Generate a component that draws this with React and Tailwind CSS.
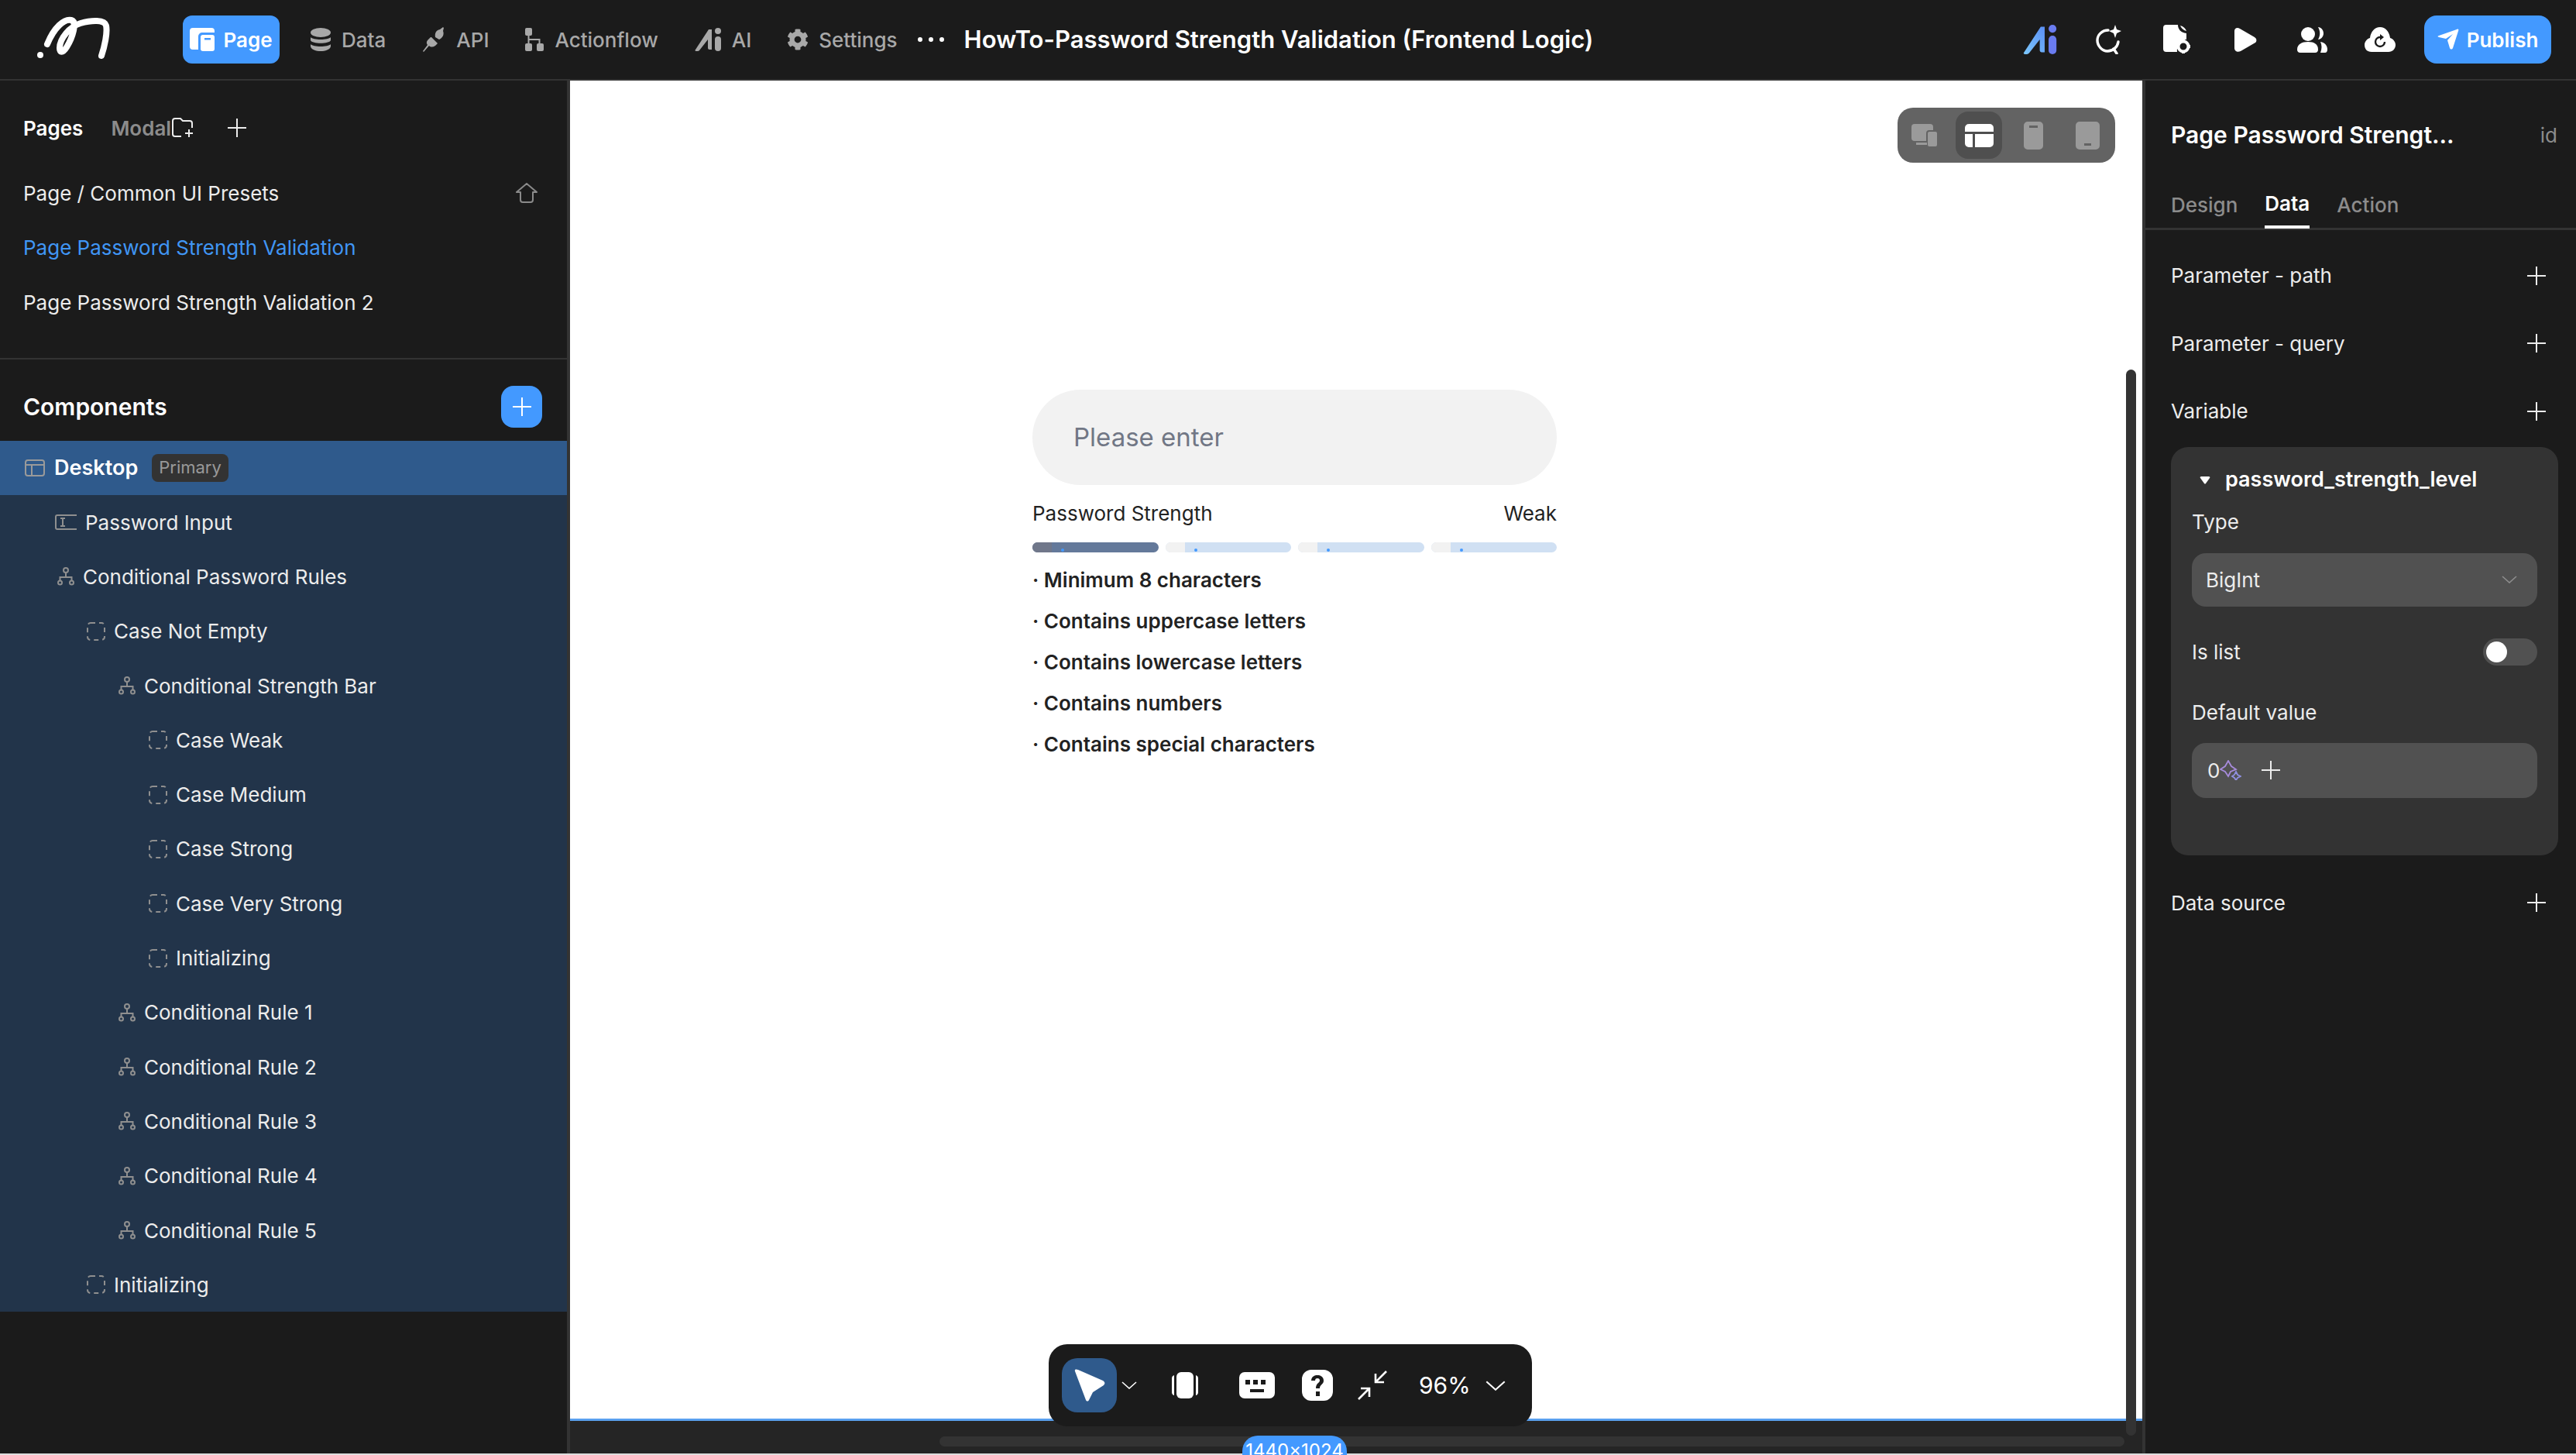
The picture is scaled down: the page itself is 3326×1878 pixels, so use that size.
import React from 'react';
import { FaCog } from 'react-icons/fa';

const Plus = ({ size = 26, className = '' }) => (
  <svg width={size} height={size} viewBox="0 0 26 26" className={className} fill="none" stroke="currentColor" strokeWidth="2">
    <path d="M13 1v24M1 13h24" />
  </svg>
);

const Chevron = ({ w = 20, h = 10, className = '' }) => (
  <svg width={w} height={h} viewBox="0 0 20 10" className={className} fill="none" stroke="currentColor" strokeWidth="1.6">
    <path d="M1 1l9 8 9-8" />
  </svg>
);

const Logo = () => (
  <svg width="110" height="60" viewBox="0 0 110 60" fill="none" stroke="#fff" strokeLinecap="round">
    <circle cx="6" cy="50" r="4" fill="#fff" stroke="none" />
    <path d="M15 36C24 14 37 3 46 5c8 2 2 22-6 35-5 8-9 7-9 1 0-12 13-28 27-32 14-4 31-5 33 3 2 9-2 27-6 39" strokeWidth="8" />
  </svg>
);

const PageIcon = () => (
  <svg width="33" height="30" viewBox="0 0 33 30" fill="#fff">
    <path d="M4 0h24a4 4 0 0 1 4 4v2H16a5 5 0 0 0-5 5v17H4a4 4 0 0 1-4-4V4a4 4 0 0 1 4-4z" />
    <rect x="14" y="9" width="18" height="21" rx="3" />
    <rect x="19" y="13" width="8" height="2.5" fill="#4399ff" />
  </svg>
);

const DataIcon = () => (
  <svg width="28" height="30" viewBox="0 0 28 30" fill="currentColor">
    <ellipse cx="14" cy="6" rx="13" ry="6" />
    <path d="M1 12c3 4 23 4 26 0v4c-2 5-24 5-26 0zM1 21c3 4 23 4 26 0v3c-2 8-24 8-26 0z" />
  </svg>
);

const ApiIcon = () => (
  <svg width="30" height="32" viewBox="0 0 30 32" fill="currentColor">
    <path d="M16 13c-1-5 1-9 6-10l4-3 1 1-1 4c2 5-1 9-5 11z" />
    <path d="M11 13l8 8-3 3c-3 2-6 2-8 0l-7 8-1-1 6-8c-2-3-1-5 1-7l1-1 2-2z" />
  </svg>
);

const FlowIcon = () => (
  <svg width="26" height="30" viewBox="0 0 26 30" fill="currentColor">
    <rect x="1" y="0" width="9" height="10" rx="2" />
    <rect x="1" y="20" width="9" height="10" rx="2" />
    <rect x="16" y="20" width="9" height="10" rx="2" />
    <path d="M4.5 9h2v5h14v7h-2v-5h-12v5h-2z" />
  </svg>
);

const AiIcon = ({ left = 'currentColor', right = 'currentColor', w = 37, h = 30 }) => (
  <svg width={w} height={h} viewBox="0 0 37 30" fill="none">
    <path d="M3 28L20 2h4v26h-3c-1 0-2-1-2-2V15L8 29c-2 2-7 1-5-1z" fill={left} />
    <circle cx="32" cy="4" r="4" fill={right} />
    <rect x="28" y="11" width="8" height="19" rx="4" fill={right} />
  </svg>
);

const SearchSpark = () => (
  <svg width="36" height="38" viewBox="0 0 36 38" fill="none" stroke="#fff" strokeWidth="3.4">
    <path d="M17 7C9 7 3 13 3 20s6 14 13 14c7 0 13-5 14-12" strokeLinecap="round" />
    <path d="M24 31l4 6" strokeLinecap="round" />
    <path d="M26 0l2 6 6 2-6 3-2 6-2-6-6-3 6-2z" fill="#fff" stroke="none" />
  </svg>
);

const DocGear = () => (
  <svg width="36" height="38" viewBox="0 0 36 38" fill="#fff">
    <path d="M4 0h15c0 6 4 10 11 11v8c-7 0-13 6-12 16H4a4 4 0 0 1-4-4V4a4 4 0 0 1 4-4z" />
    <path d="M22 1c1 3 4 6 8 7-1-3-4-6-8-7z" />
    <circle cx="26" cy="28" r="6.5" fill="none" stroke="#fff" strokeWidth="4" />
    <path d="M24 19h4v3h-4zM24 34h4v3h-4zM17 26h3v4h-3zM32 26h3v4h-3z" />
  </svg>
);

const PlayIcon = () => (
  <svg width="29" height="31" viewBox="0 0 29 31" fill="#fff">
    <path d="M0 4c0-4 4-5 7-3l19 11c3 2 3 5 1 7L8 30c-4 2-8 0-8-4z" />
  </svg>
);

const UsersIcon = () => (
  <svg width="39" height="33" viewBox="0 0 39 33" fill="#fff">
    <ellipse cx="14" cy="9" rx="9" ry="9" />
    <path d="M0 29c0-7 6-10 14-10s13 3 13 10c0 2-1 4-4 4H4c-3 0-4-2-4-4z" />
    <path d="M27 0c4 0 7 4 7 8s-3 8-7 8c3-5 3-11 0-16zM30 19c6 1 9 5 9 10 0 2-1 4-3 4h-6c2-5 2-10 0-14z" />
  </svg>
);

const CloudIcon = () => (
  <svg width="40" height="32" viewBox="0 0 40 32" fill="#fff">
    <path d="M9 32C3 32 0 28 0 23c0-4 3-8 7-9 1-8 6-14 13-14s12 6 13 14c4 1 7 5 7 9 0 5-4 9-9 9z" />
    <path d="M20 13a6 6 0 1 0 6 6" fill="none" stroke="#1b1b1b" strokeWidth="2.4" />
    <path d="M20 9l5 4-5 4z" fill="#1b1b1b" />
  </svg>
);

const SendIcon = () => (
  <svg width="28" height="28" viewBox="0 0 28 28" fill="#fff">
    <path d="M2 9L25 1c2-1 3 0 2 2l-7 22c-1 2-3 2-4 0l-3-10 7-8-9 6-9-2c-2-1-2-1 0-2z" />
  </svg>
);

const FolderPlus = () => (
  <svg width="30" height="26" viewBox="0 0 30 26" fill="none" stroke="currentColor" strokeWidth="2">
    <path d="M13 24H5a3 3 0 0 1-3-3V4a3 3 0 0 1 3-3h7l3 3h9a3 3 0 0 1 3 3v6" />
    <path d="M23 15v10M18 20h10" />
  </svg>
);

const HomeIcon = () => (
  <svg width="30" height="26" viewBox="0 0 30 26" fill="none" stroke="#8a8a8a" strokeWidth="2">
    <path d="M15 1L2 12h5v10a3 3 0 0 0 3 3h10a3 3 0 0 0 3-3V12h5z" strokeLinejoin="round" />
  </svg>
);

const LayoutIcon = () => (
  <svg width="26" height="22" viewBox="0 0 26 22" fill="none" stroke="#9a9a9a" strokeWidth="2">
    <rect x="1" y="1" width="24" height="20" rx="3" />
    <path d="M1 7h24M9 7v14" />
  </svg>
);

const InputIcon = () => (
  <svg width="28" height="20" viewBox="0 0 28 20" fill="none" stroke="#8f8f8f" strokeWidth="2">
    <path d="M28 1H3a2 2 0 0 0-2 2v14a2 2 0 0 0 2 2h25" />
    <path d="M7 5h6M10 5v10M7 15h6" />
  </svg>
);

const BranchIcon = () => (
  <svg width="22" height="24" viewBox="0 0 22 24" fill="none" stroke="#8f8f8f" strokeWidth="2">
    <circle cx="11" cy="4" r="3" />
    <circle cx="3.5" cy="20" r="2.5" />
    <circle cx="18.5" cy="20" r="2.5" />
    <path d="M11 7v6M3.5 17v-4h15v4" />
  </svg>
);

const DashedIcon = () => (
  <svg width="24" height="24" viewBox="0 0 24 24" fill="none" stroke="#8f8f8f" strokeWidth="2" strokeDasharray="6 5">
    <rect x="1" y="1" width="22" height="22" rx="4" />
  </svg>
);

const Sparkles = () => (
  <svg width="28" height="26" viewBox="0 0 28 26" fill="none" strokeWidth="1.8">
    <path d="M11 1l4 7 6 4-7 3-3 6-4-6-6-3 6-4z" stroke="#a78bdc" />
    <path d="M21 15l2 4 4 2-4 2-2 3-2-3-3-2 3-2z" stroke="#8f8fe0" />
  </svg>
);

const navItems = [
  { label: 'Data', icon: <DataIcon />, cls: 'ml-[39px]' },
  { label: 'API', icon: <ApiIcon />, cls: 'ml-[48px]' },
  { label: 'Actionflow', icon: <FlowIcon />, cls: 'ml-[46px]' },
  { label: 'AI', icon: <AiIcon />, cls: 'ml-[45px]' },
  { label: 'Settings', icon: <FaCog size={28} />, cls: 'ml-[46px]' },
];

const TopBar = () => (
  <header className="flex h-[104px] shrink-0 items-center border-b-2 border-[#333] bg-[#1b1b1b] text-[#a8a8a8]">
    <div className="ml-[46px] w-[190px] shrink-0"><Logo /></div>
    <div className="flex h-[62px] w-[125px] shrink-0 items-center justify-center gap-[10px] rounded-[12px] bg-[#4399ff] text-[26px] font-semibold text-white">
      <PageIcon /> Page
    </div>
    {navItems.map((item) => (
      <div key={item.label} className={`flex items-center gap-[13px] text-[26px] font-medium ${item.cls}`}>
        {item.icon}
        {item.label}
      </div>
    ))}
    <div className="ml-[26px] flex w-[34px] justify-between">
      <span className="h-[6px] w-[6px] rounded-full bg-white" />
      <span className="h-[6px] w-[6px] rounded-full bg-white" />
      <span className="h-[6px] w-[6px] rounded-full bg-white" />
    </div>
    <div className="ml-[26px] text-[31px] font-semibold text-white">HowTo-Password Strength Validation (Frontend Logic)</div>
    <div className="ml-auto flex items-center text-white">
      <AiIcon left="url(#aiGrad)" right="#6a7cf0" w={56} h={38} />
      <svg width="0" height="0">
        <defs>
          <linearGradient id="aiGrad" x1="0" y1="1" x2="1" y2="0">
            <stop offset="0" stopColor="#7cc8fb" />
            <stop offset="1" stopColor="#5b8ff5" />
          </linearGradient>
        </defs>
      </svg>
      <div className="ml-[44px]"><SearchSpark /></div>
      <div className="ml-[52px]"><DocGear /></div>
      <div className="ml-[56px]"><PlayIcon /></div>
      <div className="ml-[52px]"><UsersIcon /></div>
      <div className="ml-[48px]"><CloudIcon /></div>
      <div className="mx-[32px] ml-[37px] flex h-[62px] w-[164px] items-center justify-center gap-[10px] rounded-[16px] bg-[#4399ff] text-[26px] font-semibold">
        <SendIcon /> Publish
      </div>
    </div>
  </header>
);

const pages = [
  { label: 'Page / Common UI Presets', cls: 'text-[#ececec]', home: true },
  { label: 'Page Password Strength Validation', cls: 'text-[#4096f5]' },
  { label: 'Page Password Strength Validation 2', cls: 'text-[#ececec]' },
];

const tree = [
  { label: 'Password Input', icon: <InputIcon />, cls: 'pl-[71px]' },
  { label: 'Conditional Password Rules', icon: <BranchIcon />, cls: 'pl-[74px]' },
  { label: 'Case Not Empty', icon: <DashedIcon />, cls: 'pl-[112px]' },
  { label: 'Conditional Strength Bar', icon: <BranchIcon />, cls: 'pl-[153px]' },
  { label: 'Case Weak', icon: <DashedIcon />, cls: 'pl-[192px]' },
  { label: 'Case Medium', icon: <DashedIcon />, cls: 'pl-[192px]' },
  { label: 'Case Strong', icon: <DashedIcon />, cls: 'pl-[192px]' },
  { label: 'Case Very Strong', icon: <DashedIcon />, cls: 'pl-[192px]' },
  { label: 'Initializing', icon: <DashedIcon />, cls: 'pl-[192px]' },
  { label: 'Conditional Rule 1', icon: <BranchIcon />, cls: 'pl-[153px]' },
  { label: 'Conditional Rule 2', icon: <BranchIcon />, cls: 'pl-[153px]' },
  { label: 'Conditional Rule 3', icon: <BranchIcon />, cls: 'pl-[153px]' },
  { label: 'Conditional Rule 4', icon: <BranchIcon />, cls: 'pl-[153px]' },
  { label: 'Conditional Rule 5', icon: <BranchIcon />, cls: 'pl-[153px]' },
  { label: 'Initializing', icon: <DashedIcon />, cls: 'pl-[112px]' },
];

const LeftPanel = () => (
  <aside className="flex w-[736px] shrink-0 flex-col border-r-4 border-[#333] bg-[#1b1b1b] text-[#ececec]">
    <div className="flex h-[110px] shrink-0 items-center pl-[30px] pr-[37px] pt-[12px] text-[26px] font-semibold">
      <span className="text-white">Pages</span>
      <span className="ml-[36px] text-[#8c8c8c]">Modal</span>
      <FolderPlus />
      <Plus className="ml-[42px]" />
    </div>
    {pages.map((p) => (
      <div key={p.label} className={`flex h-[70.5px] shrink-0 items-center justify-between pl-[30px] pr-[37px] text-[26px] ${p.cls}`}>
        {p.label}
        {p.home && <HomeIcon />}
      </div>
    ))}
    <div className="mt-[36px] h-[2px] shrink-0 bg-[#333]" />
    <div className="flex h-[105px] shrink-0 items-center justify-between pl-[30px] pr-[32px] pt-[18px]">
      <span className="text-[30px] font-semibold text-white">Components</span>
      <div className="flex h-[54px] w-[53px] items-center justify-center rounded-[16px] bg-[#4399ff] text-white"><Plus /></div>
    </div>
    <div className="flex h-[70.5px] shrink-0 items-center bg-[#2f5a8c] pl-[32px]">
      <LayoutIcon />
      <span className="ml-[12px] text-[27px] font-semibold text-white">Desktop</span>
      <span className="ml-[18px] flex h-[36px] items-center rounded-[8px] bg-[#333] px-[9px] text-[22px] text-[#999]">Primary</span>
    </div>
    <div className="bg-[#22344a]">
      {tree.map((row, i) => (
        <div key={i} className={`flex h-[70.3px] items-center gap-[11px] text-[26px] text-[#ececec] ${row.cls}`}>
          {row.icon}
          {row.label}
        </div>
      ))}
    </div>
  </aside>
);

const Bar = ({ on }) => (
  <div className={`relative flex h-[13px] flex-1 overflow-hidden rounded-full ${on ? 'bg-[#64799a]' : 'bg-[#d0e0f3]'}`}>
    <div className={`h-full w-[25px] ${on ? 'bg-[#70778a]' : 'bg-[#f2f2f2]'}`} />
    <span className="absolute bottom-[1px] left-[37px] h-[4px] w-[4px] rounded-full bg-[#4399ff]" />
  </div>
);

const rules = [
  'Minimum 8 characters',
  'Contains uppercase letters',
  'Contains lowercase letters',
  'Contains numbers',
  'Contains special characters',
];

const Canvas = () => (
  <main className="relative flex flex-1 flex-col bg-[#252525]">
    <div className="h-[1730px] border-b-[3px] border-[#5aa0ee] bg-white pl-[597px] pt-[399px]">
      <div className="w-[677px] text-[#222]">
        <div className="flex h-[123px] items-center rounded-full bg-[#f2f2f2] pl-[53px] text-[33px] text-[#717785]">Please enter</div>
        <div className="mt-[20px] flex h-[33px] items-center justify-between text-[26px]">
          <span>Password Strength</span>
          <span>Weak</span>
        </div>
        <div className="mt-[21px] flex gap-[9px]">
          <Bar on />
          <Bar />
          <Bar />
          <Bar />
        </div>
        <div className="mt-[9px] flex flex-col text-[26px] font-semibold">
          {rules.map((r) => (
            <div key={r} className="flex h-[53px] items-center">· {r}</div>
          ))}
        </div>
      </div>
    </div>

    <div className="absolute left-[1714px] top-[35px] flex h-[71px] w-[281px] items-center justify-between rounded-[20px] bg-[#636363] px-[5px] text-[#9a9a9a]">
      <div className="flex h-[61px] w-[60px] items-center justify-center">
        <svg width="34" height="30" viewBox="0 0 34 30" fill="currentColor">
          <rect x="0" y="0" width="28" height="22" rx="4" />
          <rect x="20" y="9" width="14" height="21" rx="3" stroke="#636363" strokeWidth="2" />
          <rect x="6" y="24" width="14" height="3" />
        </svg>
      </div>
      <div className="flex h-[61px] w-[60px] items-center justify-center rounded-[16px] bg-[#4f4f4f]">
        <svg width="37" height="30" viewBox="0 0 37 30" fill="#fff">
          <path d="M5 0h27a5 5 0 0 1 5 5v5H0V5a5 5 0 0 1 5-5zM0 13h10v17H5a5 5 0 0 1-5-5zM13 13h24v12a5 5 0 0 1-5 5H13z" />
        </svg>
      </div>
      <div className="flex h-[61px] w-[60px] items-center justify-center">
        <svg width="25" height="36" viewBox="0 0 25 36" fill="currentColor">
          <path fillRule="evenodd" d="M5 0h15a5 5 0 0 1 5 5v26a5 5 0 0 1-5 5H5a5 5 0 0 1-5-5V5a5 5 0 0 1 5-5zM7 5v3h11V5z" />
        </svg>
      </div>
      <div className="flex h-[61px] w-[60px] items-center justify-center">
        <svg width="31" height="36" viewBox="0 0 31 36" fill="currentColor">
          <path fillRule="evenodd" d="M5 0h21a5 5 0 0 1 5 5v26a5 5 0 0 1-5 5H5a5 5 0 0 1-5-5V5a5 5 0 0 1 5-5zM11 28v3h9v-3z" />
        </svg>
      </div>
    </div>

    <div className="absolute left-[618px] top-[1631px] flex h-[106px] w-[624px] items-center rounded-[24px] bg-[#1b1b1b] pl-[17px] text-white">
      <div className="flex h-[70px] w-[71px] items-center justify-center rounded-[20px] bg-[#2f5a8c]">
        <svg width="42" height="42" viewBox="0 0 42 42" fill="#fff">
          <path d="M2 3c-1-3 2-3 4-2l32 14c3 2 3 4 1 6l-14 9-5 10c-1 2-3 2-4 0z" />
        </svg>
      </div>
      <Chevron className="ml-[6px]" />
      <svg className="ml-[45px]" width="34" height="34" viewBox="0 0 34 34" fill="#fff">
        <rect x="6" y="0" width="22" height="34" rx="6" />
        <path d="M0 8q0-3 3-4v26q-3-1-3-4zM34 8q0-3-3-4v26q3-1 3-4z" />
      </svg>
      <svg className="ml-[53px]" width="46" height="34" viewBox="0 0 46 34" fill="#fff">
        <path fillRule="evenodd" d="M7 0h32a7 7 0 0 1 7 7v20a7 7 0 0 1-7 7H7a7 7 0 0 1-7-7V7a7 7 0 0 1 7-7zM8 10v6h6v-6zM18 10v6h6v-6zM28 10v6h6v-6zM14 22v4h18v-4z" />
      </svg>
      <svg className="ml-[35px]" width="40" height="40" viewBox="0 0 40 40" fill="#fff">
        <path fillRule="evenodd" d="M12 0h16a12 12 0 0 1 12 12v16a12 12 0 0 1-12 12H12A12 12 0 0 1 0 28V12A12 12 0 0 1 12 0zM18 28v6h5v-6zM12 14h5c0-2 1-3 3-3s3 1 3 3c0 3-5 3-5 10h5c0-5 5-5 5-10 0-4-3-7-8-7s-8 3-8 7z" />
      </svg>
      <svg className="ml-[31px]" width="40" height="40" viewBox="0 0 40 40" fill="none" stroke="#fff" strokeWidth="2.6">
        <path d="M38 2L25 15M24 5v11h11M2 38l13-13M5 24h11v11" />
      </svg>
      <span className="ml-[40px] text-[30px]">96%</span>
      <Chevron w={26} h={13} className="ml-[19px]" />
    </div>

    <div className="absolute left-[2009px] top-[373px] h-[1376px] w-[13px] rounded-full bg-[#333]" />
    <div className="absolute left-[477px] top-[1750px] h-[13px] w-[1530px] rounded-full bg-[#333]" />
    <div className="absolute left-[868px] top-[1749px] h-[40px] w-[135px] overflow-hidden rounded-t-[20px] bg-[#4399ff] text-center text-[24px] leading-[40px] text-white">1440x1024</div>
  </main>
);

const paramRows = ['Parameter - path', 'Parameter - query', 'Variable'];

const RightPanel = () => (
  <aside className="flex w-[560px] shrink-0 flex-col border-l-4 border-[#333] bg-[#1b1b1b] text-[#ececec]">
    <div className="flex h-[70px] shrink-0 items-center justify-between pl-[33px] pr-[24px] pt-[70px] text-[30px] font-semibold text-white">
      <span>Page Password Strengt...</span>
      <span className="text-[26px] font-normal text-[#8c8c8c]">id</span>
    </div>
    <div className="mt-[56px] flex h-[67px] shrink-0 gap-[35px] border-b-[3px] border-[#333] pl-[33px] text-[26px] font-medium text-[#8c8c8c]">
      <span className="flex items-center pt-[4px]">Design</span>
      <span className="flex items-center border-b-4 border-white pt-[4px] -mb-[1px] font-semibold text-white">Data</span>
      <span className="flex items-center pt-[4px]">Action</span>
    </div>
    <div className="h-[15px] shrink-0" />
    {paramRows.map((label) => (
      <div key={label} className="flex h-[87.5px] shrink-0 items-center justify-between pl-[33px] pr-[38px] text-[26px]">
        {label}
        <Plus />
      </div>
    ))}
    <div className="ml-[33px] mr-[23px] mt-[2px] h-[527px] shrink-0 rounded-[22px] bg-[#333] px-[27px] pt-[29px] text-[26px]">
      <div className="flex h-[28px] items-center text-[27px] font-semibold text-white">
        <svg className="ml-[10px] mr-[19px]" width="14" height="10" viewBox="0 0 14 10" fill="#fff"><path d="M1 2c-1-1 0-2 1-2h10c1 0 2 1 1 2L8 9c-1 1-1 1-2 0z" /></svg>
        password_strength_level
      </div>
      <div className="mt-[25px] flex h-[30px] items-center">Type</div>
      <div className="mt-[25px] flex h-[69px] items-center justify-between rounded-[18px] bg-[#515151] pl-[18px] pr-[26px]">
        BigInt
        <Chevron className="text-[#8e8e8e]" />
      </div>
      <div className="mt-[41px] flex h-[35px] items-center justify-between">
        Is list
        <div className="flex h-[35px] w-[70px] items-center rounded-full bg-[#515151] pl-[4px]"><span className="h-[27px] w-[27px] rounded-full bg-white" /></div>
      </div>
      <div className="mt-[45px] flex h-[32px] items-center">Default value</div>
      <div className="mt-[23px] flex h-[71px] items-center rounded-[18px] bg-[#515151] pl-[20px] pr-[22px]">
        <span>0</span>
        <Sparkles />
        <Plus className="ml-[25px]" />
      </div>
    </div>
    <div className="mt-[18px] flex h-[87.5px] shrink-0 items-center justify-between pl-[33px] pr-[38px] text-[26px]">
      Data source
      <Plus />
    </div>
  </aside>
);

export default function App() {
  return (
    <div className="flex h-[1878px] w-[3326px] flex-col overflow-hidden bg-[#1b1b1b] font-['Inter',sans-serif]">
      <TopBar />
      <div className="flex h-[1772px] shrink-0">
        <LeftPanel />
        <Canvas />
        <RightPanel />
      </div>
      <div className="h-[2px] shrink-0 bg-[#ddd]" />
    </div>
  );
}
